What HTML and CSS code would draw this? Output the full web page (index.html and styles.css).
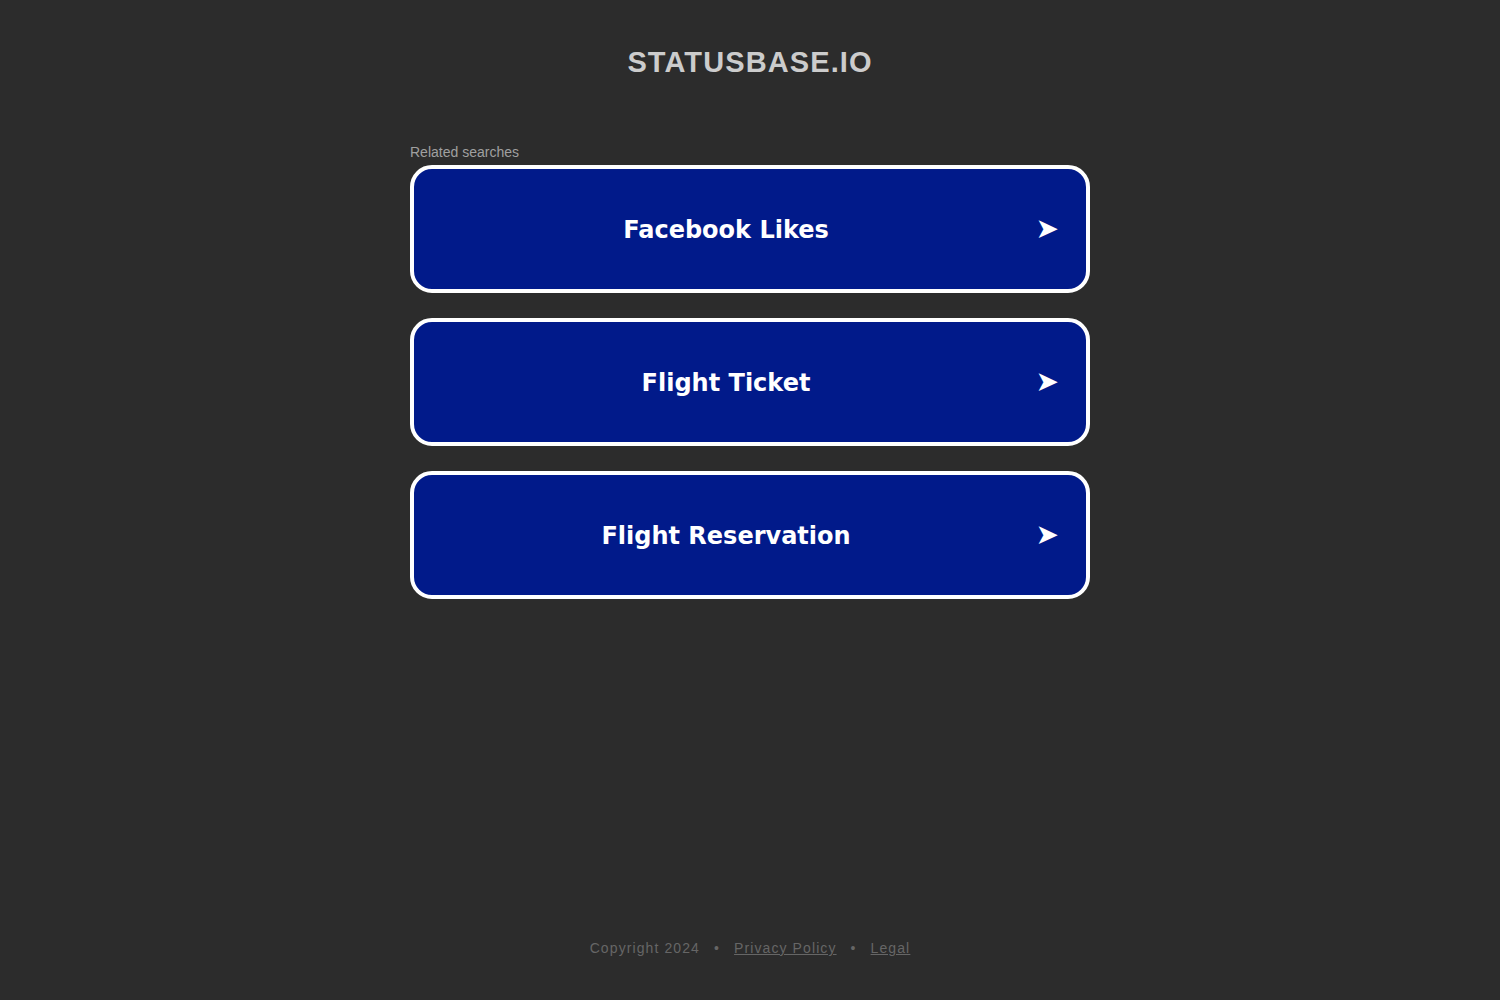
FILE: index.html
```html
<!DOCTYPE html>
<html>
<head>
<meta charset="utf-8">
<link rel="stylesheet" href="styles.css">
</head>
<body>
<div class="page">
  <header class="header"><h1 class="domain">STATUSBASE.IO</h1></header>
  <main class="main">
    <div class="related">Related searches</div>
    <a class="result" href="#"><span class="label">Facebook Likes</span><span class="arrow">➤</span></a>
    <a class="result" href="#"><span class="label">Flight Ticket</span><span class="arrow">➤</span></a>
    <a class="result" href="#"><span class="label">Flight Reservation</span><span class="arrow">➤</span></a>
  </main>
  <footer class="footer">
    <span>Copyright 2024</span><span class="dot">•</span><a href="#">Privacy Policy</a><span class="dot">•</span><a href="#">Legal</a>
  </footer>
</div>
</body>
</html>
```

FILE: styles.css
```css
html, body {
  margin: 0;
  padding: 0;
  background: #2c2c2c;
  height: 100%;
}
.page {
  min-height: 1000px;
  display: flex;
  flex-direction: column;
  align-items: center;
  font-family: "Liberation Sans", Arial, sans-serif;
}
.header {
  padding-top: 45px;
}
.domain {
  margin: 0;
  font-size: 29px;
  line-height: 34px;
  font-weight: bold;
  color: #cccccc;
  letter-spacing: 1.1px;
}
.main {
  width: 680px;
  margin-top: 65px;
  display: flex;
  flex-direction: column;
}
.related {
  font-size: 14px;
  line-height: 16px;
  color: #a0a0a0;
  margin-bottom: 5px;
}
.result {
  box-sizing: border-box;
  height: 128px;
  border: 4px solid #ffffff;
  border-radius: 22px;
  background: #011a8a;
  display: flex;
  align-items: center;
  justify-content: center;
  position: relative;
  text-decoration: none;
  color: #ffffff;
  margin-bottom: 25px;
}
.label {
  font-family: "DejaVu Sans", Verdana, sans-serif;
  font-weight: bold;
  font-size: 24px;
  margin-right: 48px;
  padding-top: 2px;
}
.arrow {
  position: absolute;
  right: 27px;
  top: 50%;
  transform: translateY(-50%);
  font-family: "DejaVu Sans", sans-serif;
  font-size: 28px;
  line-height: 1;
}
.footer {
  margin-top: auto;
  padding-bottom: 44px;
  font-size: 14px;
  letter-spacing: 1.1px;
  color: #666666;
}
.footer a {
  color: #666666;
}
.dot {
  margin: 0 14px;
}
```
